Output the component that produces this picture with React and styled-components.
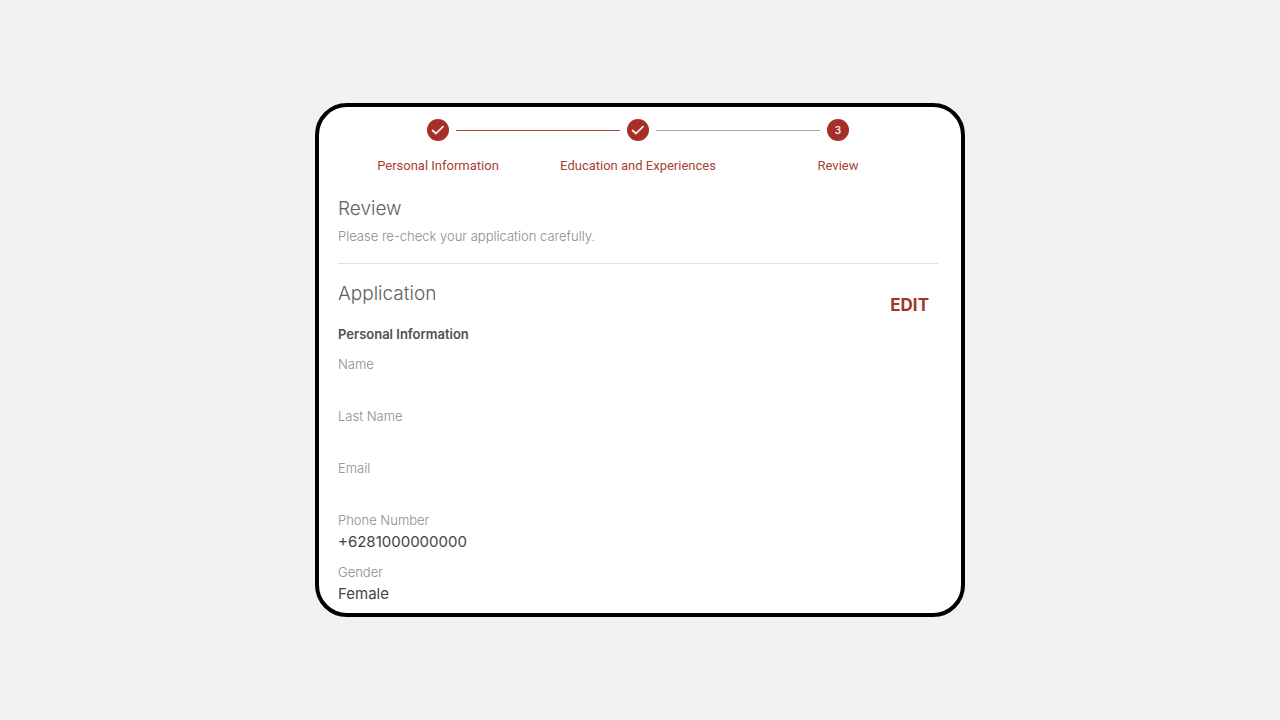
import React from 'react'
import styled, { createGlobalStyle, css } from 'styled-components'

const STEPS = [
  { label: 'Personal Information', done: true },
  { label: 'Education and Experiences', done: true },
  { label: 'Review', done: false },
]

const FIELDS = [
  { label: 'Name', value: '' },
  { label: 'Last Name', value: '' },
  { label: 'Email', value: '' },
  { label: 'Phone Number', value: '+6281000000000' },
  { label: 'Gender', value: 'Female' },
]

const CheckIcon = () => (
  <svg width="22" height="22" viewBox="0 0 22 22" aria-hidden="true">
    <path d="M5.2 11l3.7 3.6 7.6-7.4" fill="none" stroke="#fbeeee" strokeWidth="1.8" />
  </svg>
)

const Stepper = () => (
  <StepList>
    {STEPS.map((step, index) => (
      <Step key={step.label}>
        <Track>
          <Line $hidden={index === 0} $active={index === 1} />
          <Circle>{step.done ? <CheckIcon /> : index + 1}</Circle>
          <Line $hidden={index === STEPS.length - 1} $active={index === 0} />
        </Track>
        <StepLabel>{step.label}</StepLabel>
      </Step>
    ))}
  </StepList>
)

const App = () => (
  <Page>
    <GlobalStyle />
    <Card>
      <Stepper />
      <Intro>
        <Title>Review</Title>
        <Description>Please re-check your application carefully.</Description>
      </Intro>
      <SectionHeader>
        <div>
          <Title>Application</Title>
          <Subtitle>Personal Information</Subtitle>
        </div>
        <EditButton type="button">EDIT</EditButton>
      </SectionHeader>
      <Fields>
        {FIELDS.map((field) => (
          <Field key={field.label}>
            <Label>{field.label}</Label>
            <Value>{field.value}</Value>
          </Field>
        ))}
      </Fields>
    </Card>
  </Page>
)

export default App

/**
 * Styles
 */

const GlobalStyle = createGlobalStyle`
  * {
    box-sizing: border-box;
  }

  body {
    margin: 0;
    background-color: #f1f1f1;
    font-family: Inter, Roboto, sans-serif;
  }
`

const Page = styled.main`
  min-height: 100vh;
  display: flex;
  align-items: center;
  justify-content: center;
`

const Card = styled.section`
  width: 100%;
  max-width: 650px;
  padding: 12px 23px 9px 19px;
  background-color: #ffffff;
  border: 4px solid #000000;
  border-radius: 32px;
`

const StepList = styled.ol`
  display: flex;
  margin: 0;
  padding: 0;
  list-style: none;
`

const Step = styled.li`
  flex: 1 1 0;
  min-width: 0;
`

const Track = styled.div`
  display: flex;
  align-items: center;
`

const Line = styled.span`
  flex: 1;
  height: 1px;
  background-color: ${({ $active }) => ($active ? '#b0453d' : '#a8a8a8')};
  ${({ $hidden }) =>
    $hidden &&
    css`
      visibility: hidden;
    `};
`

const Circle = styled.span`
  display: flex;
  align-items: center;
  justify-content: center;
  width: 22px;
  height: 22px;
  margin: 0 7px;
  border-radius: 50%;
  background-color: #a72f27;
  color: #fbeeee;
  font-size: 10px;
  font-weight: 600;
`

const StepLabel = styled.div`
  margin-top: 15px;
  color: #a83f38;
  font-family: Roboto, sans-serif;
  font-size: 13px;
  line-height: 20px;
  text-align: center;
`

const Intro = styled.header`
  margin-top: 21px;
  padding-bottom: 16px;
  border-bottom: 1px solid #e2e2e2;
`

const Title = styled.h2`
  margin: 0;
  color: #606060;
  font-size: 19px;
  font-weight: 300;
  line-height: 24px;
`

const Description = styled.p`
  margin: 5px 0 1px;
  color: #8c8c8c;
  font-size: 13px;
  font-weight: 300;
  line-height: 20px;
`

const SectionHeader = styled.div`
  display: flex;
  align-items: flex-start;
  justify-content: space-between;
  margin-top: 18px;
`

const Subtitle = styled.h3`
  margin: 18px 0 0;
  color: #505050;
  font-size: 13px;
  font-weight: 600;
  line-height: 20px;
`

const EditButton = styled.button`
  height: 36px;
  margin-top: 5px;
  padding: 0 9px;
  border: 0;
  background: none;
  color: #a5332c;
  font-family: inherit;
  font-size: 17px;
  font-weight: 700;
  cursor: pointer;
`

const Fields = styled.dl`
  display: grid;
  gap: 10px;
  margin: 10px 0 0;
`

const Field = styled.div`
  line-height: 21px;
`

const Label = styled.dt`
  color: #8c8c8c;
  font-size: 13px;
  font-weight: 300;
`

const Value = styled.dd`
  min-height: 21px;
  margin: 0;
  color: #444444;
  font-size: 15px;
`
